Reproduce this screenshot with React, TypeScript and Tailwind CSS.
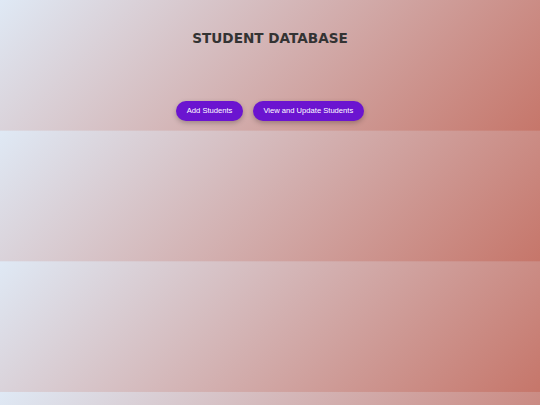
export default function App() {
  return (
    <div className="min-h-screen w-full bg-[linear-gradient(135deg,#dfe9f5_0%,#c6766a_100%)] bg-[length:100%_130.67px] bg-repeat">
      <div className="h-[130.67px] flex flex-col items-center">
        <h1 className="mt-[30px] text-[13.6px] leading-[16px] font-bold text-[#333333] [font-family:'DejaVu_Sans',sans-serif]">
          STUDENT DATABASE
        </h1>
        <div className="mt-[55px] flex gap-[10px] [font-family:'Liberation_Sans',Arial,sans-serif]">
          <button className="h-[20px] px-[10.5px] rounded-full bg-[#6b14d0] text-white text-[7.6px] shadow-[0_2px_5px_rgba(0,0,0,0.25)]">
            Add Students
          </button>
          <button className="h-[20px] px-[10.5px] rounded-full bg-[#6b14d0] text-white text-[7.6px] shadow-[0_2px_5px_rgba(0,0,0,0.25)]">
            View and Update Students
          </button>
        </div>
      </div>
    </div>
  );
}
